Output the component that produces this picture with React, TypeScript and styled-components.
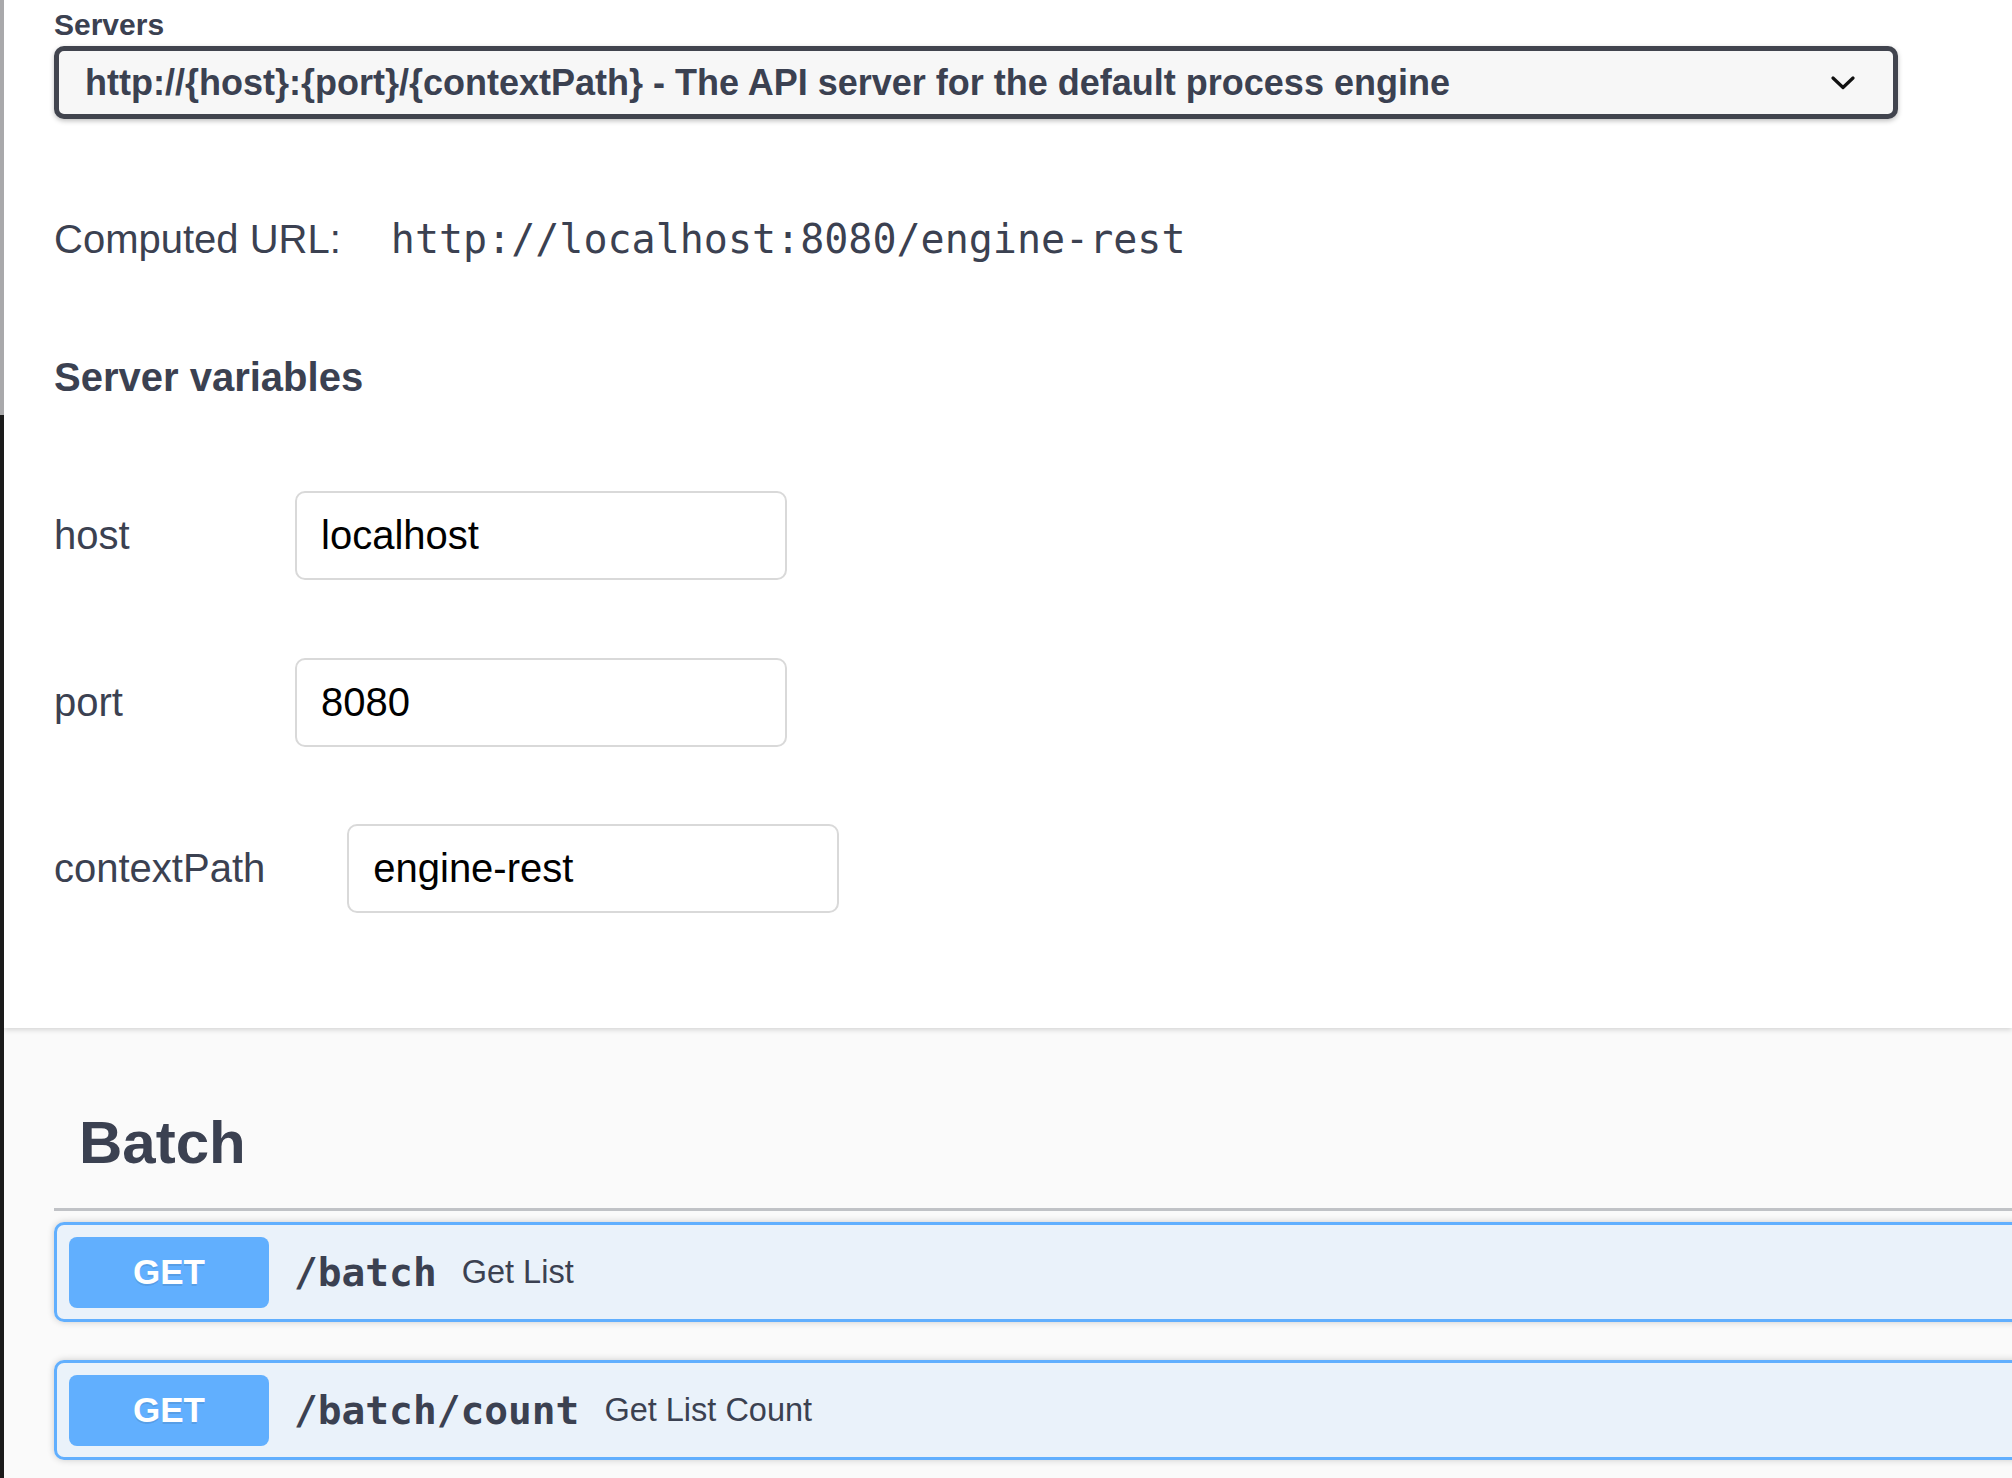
import React from "react";
import styled, { createGlobalStyle } from "styled-components";

const ink = "#3b4151";
const getBlue = "#61affe";

const GlobalStyle = createGlobalStyle`
  html, body {
    margin: 0;
    padding: 0;
    overflow: hidden;
    background: #fafafa;
  }
  body {
    font-family: "Liberation Sans", Helvetica, Arial, sans-serif;
    color: ${ink};
  }
  * {
    box-sizing: border-box;
  }
`;

const Page = styled.div`
  display: flex;
  width: 2012px;
  height: 1478px;
  overflow: hidden;
`;

const EdgeStrip = styled.div`
  display: flex;
  flex-direction: column;
  width: 4px;
  flex-shrink: 0;
`;

const EdgePart = styled.div<{ $dark?: boolean; $grow?: boolean }>`
  height: ${p => (p.$grow ? "auto" : "415px")};
  flex: ${p => (p.$grow ? 1 : "none")};
  background: ${p => (p.$dark ? "#1b1b1b" : "#a9a9ab")};
`;

const Main = styled.div`
  flex: 1;
  min-width: 0;
  overflow: hidden;
  background: #fafafa;
`;

const SchemeContainer = styled.section`
  background: #fff;
  box-shadow: 0 2px 5px 0 rgba(0, 0, 0, 0.15);
  padding: 8px 0 115px 50px;
  position: relative;
  z-index: 1;
`;

const ServersTitle = styled.div`
  font-size: 30px;
  font-weight: 700;
  line-height: 34px;
`;

const Select = styled.div`
  margin-top: 4px;
  width: 1844px;
  height: 73px;
  display: flex;
  align-items: center;
  justify-content: space-between;
  padding: 0 38px 0 26px;
  border: 5px solid #41444e;
  border-radius: 10px;
  background: #f7f7f7;
  box-shadow: 0 2px 5px 0 rgba(0, 0, 0, 0.25);
  font-size: 36px;
  font-weight: 700;
  color: ${ink};
  white-space: nowrap;
`;

const Chevron = () => (
  <svg width="24" height="14" viewBox="0 0 24 14" fill="none">
    <path
      d="M2 2 L12 11.5 L22 2"
      stroke="#111"
      strokeWidth="3.2"
      strokeLinecap="round"
      strokeLinejoin="round"
    />
  </svg>
);

const ComputedUrl = styled.div`
  margin-top: 96px;
  display: flex;
  align-items: center;
  font-size: 40px;
  line-height: 48px;
  color: ${ink};
`;

const Code = styled.code`
  margin-left: 50px;
  font-family: "DejaVu Sans Mono", "Liberation Mono", monospace;
  font-size: 40px;
  color: ${ink};
`;

const VarsTitle = styled.h4`
  margin: 90px 0 0;
  font-size: 40px;
  line-height: 48px;
  font-weight: 700;
`;

const VarList = styled.div`
  margin-top: 90px;
  display: flex;
  flex-direction: column;
  gap: 77.5px;
`;

const VarRow = styled.div`
  display: flex;
  align-items: center;
`;

const VarLabel = styled.div`
  min-width: 159px;
  margin-right: 82px;
  font-size: 40px;
  color: ${ink};
`;

const VarInput = styled.input`
  width: 492px;
  height: 89px;
  padding: 0 0 0 24px;
  border: 2px solid #d9d9d9;
  border-radius: 10px;
  background: #fff;
  font-family: "Liberation Sans", Helvetica, Arial, sans-serif;
  font-size: 40px;
  color: #000;
  outline: none;
`;

const Wrapper = styled.section`
  padding: 50px 0 0 50px;
`;

const TagHeading = styled.h3`
  margin: 0;
  padding: 25px 50px 25px 25px;
  font-size: 60px;
  line-height: 80px;
  font-weight: 700;
  color: ${ink};
  border-bottom: 3px solid rgba(59, 65, 81, 0.3);
`;

const OpList = styled.div`
  margin-top: 11px;
  display: flex;
  flex-direction: column;
  gap: 38px;
`;

const OpBlock = styled.div`
  width: 2400px;
  height: 100px;
  display: flex;
  align-items: center;
  padding: 0 12px;
  border: 3px solid ${getBlue};
  border-radius: 10px;
  background: rgba(97, 175, 254, 0.1);
  box-shadow: 0 0 7px rgba(0, 0, 0, 0.19);
`;

const Method = styled.span`
  width: 200px;
  height: 71px;
  display: flex;
  align-items: center;
  justify-content: center;
  border-radius: 8px;
  background: ${getBlue};
  color: #fff;
  font-size: 35px;
  font-weight: 700;
  text-shadow: 0 2px 0 rgba(0, 0, 0, 0.1);
`;

const OpPath = styled.span`
  padding: 0 25px;
  font-family: "DejaVu Sans Mono", "Liberation Mono", monospace;
  font-size: 39.5px;
  font-weight: 700;
  color: ${ink};
`;

const OpSummary = styled.span`
  font-size: 32.5px;
  color: ${ink};
`;

const variables = [
  { name: "host", value: "localhost" },
  { name: "port", value: "8080" },
  { name: "contextPath", value: "engine-rest" }
];

const operations = [
  { method: "GET", path: "/batch", summary: "Get List" },
  { method: "GET", path: "/batch/count", summary: "Get List Count" }
];

const App: React.FC = () => {
  return (
    <>
      <GlobalStyle />
      <Page>
        <EdgeStrip>
          <EdgePart />
          <EdgePart $dark $grow />
        </EdgeStrip>
        <Main>
          <SchemeContainer>
            <ServersTitle>Servers</ServersTitle>
            <Select>
              <span>
                http://{"{host}"}:{"{port}"}/{"{contextPath}"} - The API server for the default process engine
              </span>
              <Chevron />
            </Select>

            <ComputedUrl>
              Computed URL:
              <Code>http://localhost:8080/engine-rest</Code>
            </ComputedUrl>

            <VarsTitle>Server variables</VarsTitle>

            <VarList>
              {variables.map(v => (
                <VarRow key={v.name}>
                  <VarLabel>{v.name}</VarLabel>
                  <VarInput defaultValue={v.value} />
                </VarRow>
              ))}
            </VarList>
          </SchemeContainer>

          <Wrapper>
            <TagHeading>Batch</TagHeading>
            <OpList>
              {operations.map(op => (
                <OpBlock key={op.path}>
                  <Method>{op.method}</Method>
                  <OpPath>{op.path}</OpPath>
                  <OpSummary>{op.summary}</OpSummary>
                </OpBlock>
              ))}
            </OpList>
          </Wrapper>
        </Main>
      </Page>
    </>
  );
};

export default App;
